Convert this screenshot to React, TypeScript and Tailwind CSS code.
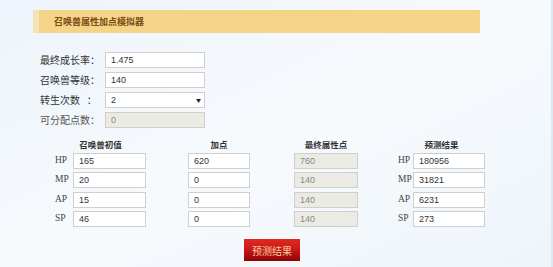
import { useState } from "react";

const cjk = "font-['Microsoft_YaHei','Noto_Sans_CJK_SC',sans-serif]";

const rows = [
  { name: "HP", base: "165", add: "620", total: "760", result: "180956" },
  { name: "MP", base: "20", add: "0", total: "140", result: "31821" },
  { name: "AP", base: "15", add: "0", total: "140", result: "6231" },
  { name: "SP", base: "46", add: "0", total: "140", result: "273" },
];

const inputCls =
  "block h-[16px] border border-[#cfcfcf] bg-white py-0 pl-[5px] text-[9px] leading-[14px] text-[#333] outline-none font-['Liberation_Sans',sans-serif]";
const disabledCls =
  "block h-[16px] border border-[#cfcfcf] bg-[#ebebe4] py-0 pl-[5px] text-[9px] leading-[14px] text-[#888] outline-none font-['Liberation_Sans',sans-serif]";

const StatLabel = ({ text, w }: { text: string; w: string }) => (
  <span
    className={`${w} shrink-0 text-[9.5px] leading-none text-[#444] font-['Liberation_Serif',serif]`}
  >
    {text}
  </span>
);

const ColHeader = ({ text }: { text: string }) => (
  <div className="h-[10px] text-center text-[8.5px] font-bold leading-[10px] text-[#333]">
    {text}
  </div>
);

export default function App() {
  const [rebirth, setRebirth] = useState("2");

  return (
    <div
      className={`relative h-[267px] w-[553px] overflow-hidden bg-gradient-to-br from-[#edf4fb] via-[#f7fafd] to-[#eef5fb] ${cjk}`}
    >
      <div className="absolute right-0 top-0 h-full w-[2px] bg-[#dbe8f4]" />

      {/* 标题 */}
      <div className="ml-[33px] mt-[10px] flex h-[23px] w-[447px] items-stretch bg-[#f4d489]">
        <div className="w-[6px] bg-[#f5e3b6]" />
        <span className="ml-[15px] self-center text-[9px] font-bold text-[#7a4a12]">
          召唤兽属性加点模拟器
        </span>
      </div>

      {/* 基础参数 */}
      <div className="ml-[40px] mt-[19px] flex flex-col gap-[4px]">
        <div className="flex h-[16px] items-center">
          <span className="w-[65px] text-[10px] leading-none text-[#333]">最终成长率：</span>
          <input className={`${inputCls} w-[100px]`} defaultValue="1.475" />
        </div>
        <div className="flex h-[16px] items-center">
          <span className="w-[65px] text-[10px] leading-none text-[#333]">召唤兽等级：</span>
          <input className={`${inputCls} w-[100px]`} defaultValue="140" />
        </div>
        <div className="flex h-[16px] items-center">
          <span className="w-[65px] text-[10px] leading-none text-[#333]">
            转生次数&nbsp;&nbsp;&nbsp;：
          </span>
          <div className="relative h-[16px] w-[100px]">
            <select
              value={rebirth}
              onChange={(e) => setRebirth(e.target.value)}
              className={`${inputCls} w-full appearance-none`}
            >
              <option value="0">0</option>
              <option value="1">1</option>
              <option value="2">2</option>
              <option value="3">3</option>
            </select>
            <span className="pointer-events-none absolute right-[4px] top-[5px] text-[5px] leading-none text-[#222]">
              ▼
            </span>
          </div>
        </div>
        <div className="flex h-[16px] items-center">
          <span className="w-[65px] text-[10px] leading-none text-[#555]">可分配点数：</span>
          <input className={`${disabledCls} w-[100px]`} defaultValue="0" disabled />
        </div>
      </div>

      {/* 属性表 */}
      <div className="mt-[11px] flex">
        <div className="ml-[55px] flex w-[91px] flex-col gap-[3.5px]">
          <ColHeader text="召唤兽初值" />
          {rows.map((r) => (
            <div key={r.name} className="flex h-[16px] items-center">
              <StatLabel text={r.name} w="w-[18px]" />
              <input className={`${inputCls} w-[73px]`} defaultValue={r.base} />
            </div>
          ))}
        </div>

        <div className="ml-[42px] flex w-[62px] flex-col gap-[3.5px]">
          <ColHeader text="加点" />
          {rows.map((r) => (
            <input key={r.name} className={`${inputCls} w-[62px]`} defaultValue={r.add} />
          ))}
        </div>

        <div className="ml-[44px] flex w-[64px] flex-col gap-[3.5px]">
          <ColHeader text="最终属性点" />
          {rows.map((r) => (
            <input
              key={r.name}
              className={`${disabledCls} w-[64px]`}
              defaultValue={r.total}
              disabled
            />
          ))}
        </div>

        <div className="ml-[40px] flex w-[87px] flex-col gap-[3.5px]">
          <ColHeader text="预测结果" />
          {rows.map((r) => (
            <div key={r.name} className="flex h-[16px] items-center">
              <StatLabel text={r.name} w="w-[15px]" />
              <input className={`${inputCls} w-[72px]`} defaultValue={r.result} />
            </div>
          ))}
        </div>
      </div>

      {/* 按钮 */}
      <button className="ml-[244px] mt-[12px] flex h-[22px] w-[56px] items-center justify-center bg-gradient-to-b from-[#e02a22] via-[#c8161a] to-[#8c0308] text-[10px] text-[#f4cf98]">
        预测结果
      </button>
    </div>
  );
}
